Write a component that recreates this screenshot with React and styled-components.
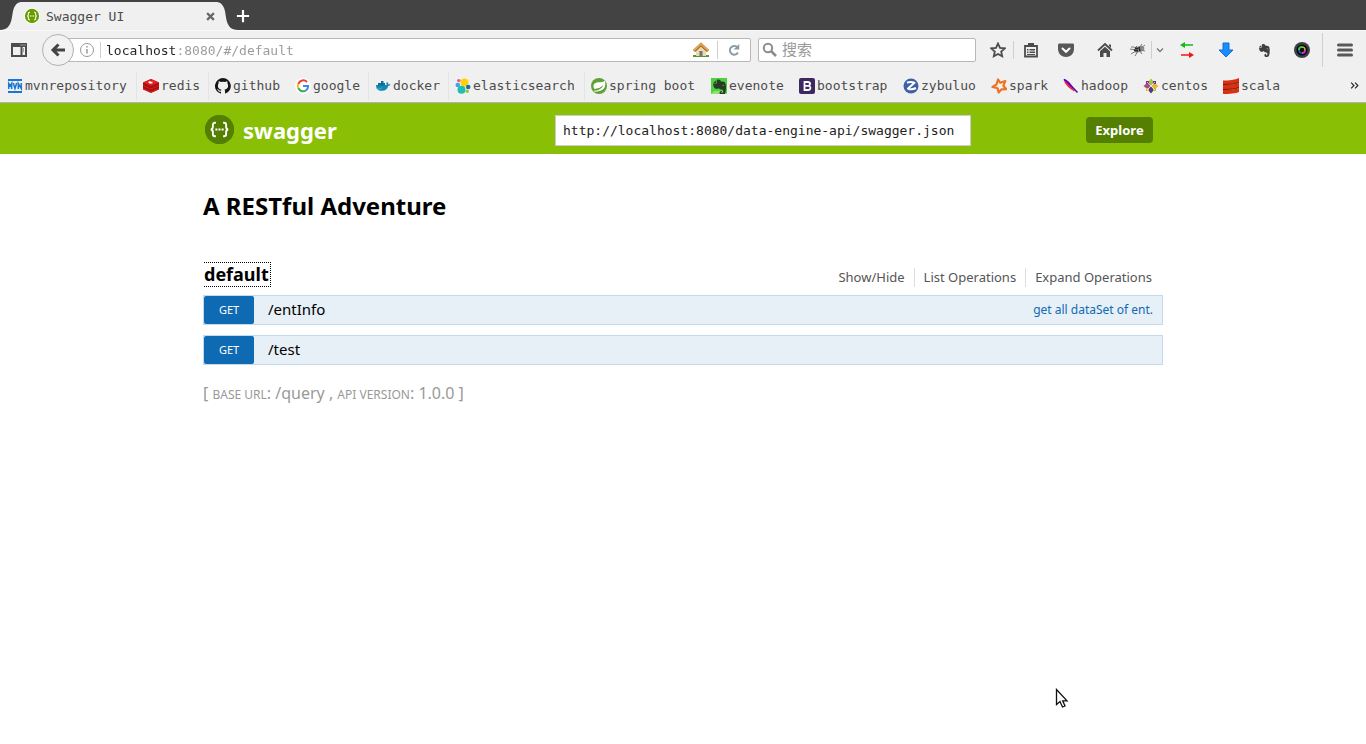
import React from 'react';
import styled, { createGlobalStyle } from 'styled-components';

const mono = '"DejaVu Sans Mono", "Noto Sans CJK SC", monospace';
const sans = '"Noto Sans", "Noto Sans CJK SC", sans-serif';

const GlobalStyle = createGlobalStyle`
  * { box-sizing: border-box; }
  body { margin: 0; background: #fff; font-family: ${sans}; color: #000; }
  button, input { font: inherit; color: inherit; margin: 0; padding: 0; border: 0; background: none; }
  h1, h2, ul { margin: 0; padding: 0; font-weight: 700; }
  ul { list-style: none; font-weight: 400; }
  a { color: inherit; text-decoration: none; }
  svg { display: block; flex: none; }
`;

const Chrome = styled.header`
  background: #f0f0f0;
  border-bottom: 1px solid #b4b4b4;
  font-family: ${mono};
  font-size: 13px;
  color: #4c4c4c;
`;
const TabStrip = styled.div`
  display: flex;
  height: 30px;
  background: #434343;
`;
const Tab = styled.div`
  display: flex;
  align-items: center;
  gap: 6px;
  width: 194px;
  height: 28px;
  margin-top: 2px;
  background: #f0f0f0;
  padding-left: 2px;
`;
const TabEdge = styled.svg`
  margin-top: 2px;
`;
const TabTitle = styled.span`
  flex: 1;
`;
const IconButton = styled.button`
  display: flex;
  align-items: center;
  justify-content: center;
  flex: none;
  width: ${(p) => p.$w || 38}px;
  height: 32px;
`;
const TabButton = styled(IconButton)`
  height: 28px;
`;
const NavBar = styled.div`
  display: flex;
  align-items: center;
  height: 39px;
  border-top: 1px solid #f8f8f8;
`;
const BackButton = styled.button`
  display: flex;
  align-items: center;
  justify-content: center;
  flex: none;
  position: relative;
  width: 32px;
  height: 32px;
  margin: 0 -8px 0 4px;
  border: 1px solid #b2b2b2;
  border-radius: 50%;
  background: #f2f2f2;
`;
const Field = styled.div`
  display: flex;
  align-items: center;
  height: 24px;
  border: 1px solid #b8b8b8;
  border-radius: 2px;
  background: #fff;
`;
const UrlField = styled(Field)`
  flex: 1;
  min-width: 0;
  padding-left: 12px;
`;
const SearchField = styled(Field)`
  width: 218px;
  margin: 0 6px 0 7px;
  padding-left: 3px;
  gap: 4px;
`;
const Address = styled.input`
  flex: 1;
  min-width: 0;
  height: 22px;
  outline: none;
  color: transparent;
  background: linear-gradient(90deg, #222 9ch, #999 9ch);
  background-clip: text;
  -webkit-background-clip: text;
`;
const SearchInput = styled.input`
  flex: 1;
  min-width: 0;
  height: 22px;
  outline: none;
  font-size: 15px;
  &::placeholder { color: #999; opacity: 1; }
`;
const Rule = styled.span`
  flex: none;
  width: 1px;
  height: ${(p) => p.$h || 18}px;
  margin: 0 ${(p) => p.$gap || 0}px;
  background: #cfcfcf;
`;
const Bookmarks = styled.nav`
  display: flex;
  align-items: center;
  height: 33px;
  padding: 0 6px 0 7px;
`;
const Bookmark = styled.a`
  display: flex;
  align-items: center;
  gap: 2px;
  flex: none;
  height: 28px;
  padding-right: 7px;
  margin-right: 6px;
  border-right: 1px solid ${(p) => (p.$line ? '#e4e4e4' : 'transparent')};
`;
const BookmarkName = styled.span`
  min-width: ${(p) => p.$chars * 8}px;
`;
const MoreButton = styled(IconButton)`
  margin-left: auto;
`;

const Banner = styled.div`
  background: #89bf04;
`;
const Wrap = styled.div`
  max-width: 960px;
  margin: 0 auto;
`;
const BannerRow = styled(Wrap)`
  display: flex;
  align-items: center;
  height: 51px;
  padding: 2px 10px 0 2px;
`;
const Logo = styled.a`
  display: flex;
  align-items: center;
  gap: 9px;
  flex: 1;
  color: #fff;
  font-size: 22px;
  line-height: 28px;
  font-weight: 700;
`;
const SpecInput = styled.input`
  width: 416px;
  height: 31px;
  margin: 2px 115px 0 0;
  padding: 0 7px;
  border: 1px solid #ccc;
  background: #fff;
  color: #222;
  font-family: ${mono};
  font-size: 13px;
`;
const Explore = styled.button`
  width: 67px;
  height: 26px;
  border-radius: 4px;
  background: #547f00;
  color: #fff;
  font-size: 13px;
  font-weight: 700;
`;
const Title = styled.h1`
  padding-top: 34px;
  font-size: 24px;
  line-height: 36px;
`;
const ResourceHead = styled.div`
  display: flex;
  justify-content: space-between;
  margin-top: 38px;
  padding-left: 1px;
  padding-right: 11px;
`;
const ResourceName = styled.h2`
  font-size: 18px;
  line-height: 23px;
  a { display: block; padding-right: 1px; border: 1px dotted #000; border-left: 0; }
`;
const Options = styled.ul`
  display: flex;
  margin-top: 6px;
  font-size: 13px;
  line-height: 18px;
  color: #555;
`;
const Option = styled.li`
  padding: 0 9px;
  border-right: 1px solid #ddd;
  &:last-child { border: 0; padding-right: 0; }
`;
const Operation = styled.li`
  display: flex;
  height: 30px;
  margin-bottom: 10px;
  padding-right: 9px;
  border: 1px solid #c3d9ec;
  background: #e7f0f7;
`;
const Operations = styled.ul`
  margin-top: 8px;
`;
const Method = styled.a`
  width: 50px;
  border-radius: 2px;
  background: #0f6ab4;
  color: #fff;
  text-align: center;
  font-size: 11px;
  line-height: 28px;
`;
const Path = styled.a`
  flex: 1;
  padding-left: 14px;
  font-size: 15px;
  line-height: 26px;
`;
const Summary = styled.a`
  color: #0f6ab4;
  font-size: 12px;
  line-height: 28px;
`;
const Footer = styled.footer`
  padding: 6px 0 24px;
  color: #999;
  font-size: 16px;
  line-height: 24px;
`;
const Small = styled.span`
  font-size: 12px;
  text-transform: uppercase;
`;
const Pointer = styled.svg`
  position: absolute;
  left: 1055px;
  top: 688px;
`;

const Svg = ({ s = 16, children, ...rest }) => (
  <svg width={s} height={s} viewBox="0 0 16 16" fill="none" aria-hidden="true" {...rest}>{children}</svg>
);

const Braces = ({ s, bg, ring }) => (
  <svg width={s} height={s} viewBox="0 0 28 28" fill="none" aria-hidden="true">
    <circle cx="14" cy="14" r="14" fill={ring || bg} />
    <circle cx="14" cy="14" r={ring ? 12.5 : 14} fill={bg} />
    <path d="M10.5 7.5H9.6c-1.4 0-2 .7-2 2v2.2c0 1.5-.5 2.1-2 2.3 1.500.2 2 .8 2 2.300v2.200c0 1.300.6 2 2 2h.9M17.500 7.500h.9c1.400 0 2 .7 2 2v2.200c0 1.500.5 2.100 2 2.300-1.500.2-2 .8-2 2.300v2.200c0 1.300-.6 2-2 2h-.9" stroke="#fff" strokeWidth="1.800" />
    <path d="M10 13h2v2h-2zM13 13h2v2h-2zM16 13h2v2h-2z" fill="#fff" />
  </svg>
);

const HomeShape = () => (
  <>
    <path d="M1 8.500 8 2l7 6.500" stroke="#4c4c4c" strokeWidth="1.800" />
    <path d="M12 2.500h2V6l-2-2z" fill="#4c4c4c" />
    <path d="M3 9.200 8 4.700l5 4.500V15H9.500v-4h-3v4H3z" fill="#4c4c4c" />
  </>
);

const Elephant = ({ color }) => (
  <path d="M6 2.500v2.200c0 .5-.2.700-.7.700H3c.2 2.300.8 4 2 4.300 1 .3 2.400.1 2.800-.6.300 1.200 1.200 1.300 2.300 1.300 1 0 1.300.6 1.300 1.500 0 1-.4 1.400-1.400 1.400-.4-1 .2-1.300.9-1.300-1.700-.7-2.700.3-2.500 1.600.2 1.200 1.100 1.600 2.500 1.500 2-.2 2.400-1.500 2.700-4 .3-2.700.1-5-.5-6.400-.4-.8-2-.9-3.500-1C9 2.500 8 1.500 6 2.500zM5.300 2.900 3.100 5h2.200zM10.500 7c.2-.8 1.600-.7 1.700.3z" fill={color} fillRule="evenodd" />
);

const icons = {
  mvn: <><path d="M1 1h14v2H1zM1 13h14v2H1z" fill="#1976d2" /><path d="M1.700 11V5.500L3.200 8l1.500-2.500V11M6.300 5 8 10.500 9.700 5M11.300 11V5.500l3 5V5" stroke="#1976d2" strokeWidth="1.500" /></>,
  redis: <><path d="M0 4.500 8 1l8 3.500v7L8 15l-8-3.500z" fill="#a80f0f" /><path d="M0 4.500 8 1l8 3.500L8 8z" fill="#e02020" /><path d="M0 7.500 8 11l8-3.500M0 10.500 8 14l8-3.500" stroke="#dc1c1c" /><path d="m5 4 2-1 1 1 2-.5-1 1 1 .5-3 .8z" fill="#fff" /></>,
  github: <path d="M8 0a8 8 0 0 0-2.500 15.600c.4.1.5-.2.500-.4v-1.500c-2.200.5-2.700-1-2.700-1-.4-.9-.9-1.200-.9-1.200-.7-.5.1-.5.1-.5.800.1 1.200.8 1.200.8.700 1.200 1.900.9 2.300.7.100-.5.300-.9.500-1.100-1.800-.2-3.600-.9-3.600-4 0-.9.300-1.600.8-2.100-.1-.2-.4-1 .1-2.100 0 0 .7-.2 2.200.8a7.500 7.500 0 0 1 4 0c1.500-1 2.200-.8 2.200-.8.400 1.100.200 1.900.1 2.100.5.600.8 1.300.8 2.100 0 3.100-1.900 3.800-3.700 4 .3.300.6.800.6 1.500v2.200c0 .2.100.500.6.400A8 8 0 0 0 8 0z" fill="#171515" />,
  google: <><circle cx="8" cy="8" r="8" fill="#fff" /><path d="M12 4A5.200 5.200 0 0 0 3.300 5.800" stroke="#ea4335" strokeWidth="2" /><path d="M3.300 5.800a5.200 5.200 0 0 0 0 4.400" stroke="#fbbc05" strokeWidth="2" /><path d="M3.300 10.200a5.200 5.200 0 0 0 8 2" stroke="#34a853" strokeWidth="2" /><path d="M8 8h5.100c0 1.800-.6 3.200-1.800 4.200" stroke="#4285f4" strokeWidth="2" /></>,
  docker: <><path d="M1 7h11c-1-1.200-.8-2.200 0-3 1 .6 1.300 1.300 1.400 2.200.8-.1 1.500 0 2.100.4-.5 1-1.300 1.300-2.300 1.300C12.500 11 10.500 12.800 7 12.800 3 12.800 1 10.500 1 7z" fill="#1488b4" /><path d="M3 5h7v2.500H3zM6 3h2.500v2H6z" fill="#11708e" /><path d="M1.500 10.500c2 .8 4 .5 5.500-.8" stroke="#35b8d6" /></>,
  elastic: <><circle cx="9.500" cy="4.500" r="4" fill="#fed10a" /><circle cx="6.500" cy="11.700" r="4" fill="#24bbb1" /><circle cx="2.800" cy="7" r="2.300" fill="#36a9e0" /><circle cx="13.200" cy="9" r="2.300" fill="#1b6ea8" /><circle cx="3.800" cy="2.600" r="1.700" fill="#ef5098" /><circle cx="12.200" cy="13.200" r="1.700" fill="#93c83e" /></>,
  spring: <><circle cx="8" cy="8" r="8" fill="#5fa134" /><path d="M14 2.500c.8 4 .2 8-3 9.500-2.300 1-4.500 1-6.500 1 3.500-.8 7-3 8-6.500C10 10 6.500 10.500 3.500 11 1 7.500 3.500 4.500 7 4.300c3-.2 5.500.1 7-1.800z" fill="#fff" /><path d="M3 13.200c3 0 6-.5 8-2" stroke="#fff" /></>,
  evernote: <><path d="M0 0h16v16H0z" fill="#52d044" /><path d="M0 16h16l-3-3H3z" fill="#8fe36c" /><g transform="translate(-1.500 -1) scale(1.200)"><Elephant color="#263d24" /></g></>,
  bootstrap: <><rect width="16" height="16" rx="2" fill="#3d2862" /><path d="M5.500 4h3.300c3 0 3 3.700.3 3.800 3.200.1 3 4.200-.3 4.200H5.500zM5.500 7.800h3.500" stroke="#fff" strokeWidth="1.800" /></>,
  zybuluo: <><circle cx="8" cy="8" r="7.500" fill="#3f5fa8" /><path d="M4 4.700c2.500-1 5-.7 7.500 0L5 10.500c2.500 1.200 5.500.8 8-.5" stroke="#fff" strokeWidth="2" strokeLinejoin="round" /></>,
  spark: <path d="m7 1.500 2.300 3.300 5-1.800-2 4.800 3 3.400-4.700.1-3 3.200-1-4.300L1.500 9l4-2.500z" stroke="#ee7325" strokeWidth="2.200" strokeLinejoin="round" />,
  hadoop: <><path d="M.5 1c3 .3 5 2 7 4.500 2 2.400 3.300 5.500 4.500 7-3-.5-5.500-2-7.500-4.500S1.500 4 .5 1z" fill="#c4148f" /><path d="M1 1.500C4 3 8 8 14.500 14.500" stroke="#4a0cb0" strokeWidth="1.500" /><path d="M2 4c2 3 5 6 9.500 8.800" stroke="#f22849" strokeWidth="1.500" /></>,
  centos: <><path d="M8 .5 10.500 3.500V6.500L8 8 5.500 6.500v-3z" fill="#a5c83b" /><path d="M8 15.500l-2.500-3v-3L8 8l2.500 1.500v3z" fill="#4b3a8f" /><path d="m.5 8 3-2.500h3L8 8l-1.500 2.500h-3z" fill="#a14f8c" /><path d="m15.500 8-3 2.500h-3L8 8l1.500-2.500h3z" fill="#efb03c" /><path d="M3 3h3v3H3z" fill="#7b2f8c" /><path d="M10 3h3v3h-3z" fill="#4b3a8f" /><path d="M3 10h3v3H3z" fill="#efb03c" /><path d="M10 10h3v3h-3z" fill="#a5c83b" /><path d="m4 4 8 8M12 4l-8 8" stroke="#fff" strokeWidth=".7" /></>,
  scala: <><path d="M0 2.500C6 2.500 12 2 16 0v4.500C12 6 6 6.500 0 6.500zM0 7c5 0 12-.5 16-2v4.500c-3 1.500-10 2-16 2zM0 12c5 0 12-.5 16-2v4c-3 1.500-10 2-16 2z" fill="#d9300f" /><path d="M0 6.500c7 0 12-.5 16-2M0 11.500c7 0 12-.5 16-2" stroke="#7c140b" /></>,
};

const bookmarks = [
  ['mvn', 'mvnrepository', true], ['redis', 'redis', true], ['github', 'github'], ['google', 'google', true],
  ['docker', 'docker', true], ['elastic', 'elasticsearch', true], ['spring', 'spring boot'], ['evernote', 'evenote'],
  ['bootstrap', 'bootstrap'], ['zybuluo', 'zybuluo'], ['spark', 'spark'], ['hadoop', 'hadoop'], ['centos', 'centos'], ['scala', 'scala'],
];

const operations = [
  { path: '/entInfo', summary: 'get all dataSet of ent.' },
  { path: '/test' },
];

export default function App() {
  return (
    <>
      <GlobalStyle />
      <Chrome>
        <TabStrip>
          <TabEdge width="22" height="28" viewBox="0 0 22 28"><path d="M0 28C14 28 11 12 14 6c1.800-4 4-6 8-6v28z" fill="#f0f0f0" /></TabEdge>
          <Tab>
            <Braces s={16} bg="#6a9e00" ring="#fff" />
            <TabTitle>Swagger UI</TabTitle>
            <TabButton $w={12} aria-label="Close tab"><Svg s={9}><path d="m2 2 12 12M14 2 2 14" stroke="#666" strokeWidth="3.800" /></Svg></TabButton>
          </Tab>
          <TabEdge width="22" height="28" viewBox="0 0 22 28"><path d="M22 28C8 28 11 12 8 6 6.200 2 4 0 0 0v28z" fill="#f0f0f0" /></TabEdge>
          <IconButton $w={10} aria-label="New tab"><Svg s={14}><path d="M8 1v14M1 8h14" stroke="#fff" strokeWidth="2.500" /></Svg></IconButton>
        </TabStrip>
        <NavBar>
          <IconButton aria-label="Sidebar">
            <Svg><path d="M1 2h14v12H1zM1 4h14M10.500 5v9" stroke="#4c4c4c" strokeWidth="2" /><path d="M12.500 6.500v1M12.500 8.500v1" stroke="#4c4c4c" /><path d="M9.500 3h1M11.500 3h1M13.500 3h1" stroke="#ddd" /></Svg>
          </IconButton>
          <BackButton aria-label="Back"><Svg><path d="M8.500 2.500 3 8l5.500 5.500M4 8h11" stroke="#444" strokeWidth="3" /></Svg></BackButton>
          <UrlField>
            <Svg><circle cx="8" cy="8" r="6.500" stroke="#999" /><path d="M8 7v4.500M8 4v1.500" stroke="#999" strokeWidth="1.500" /></Svg>
            <Rule $gap={5} $h={16} />
            <Address aria-label="Address" defaultValue="localhost:8080/#/default" />
            <IconButton $w={32} aria-label="Home page">
              <Svg>
                <path d="M0 13h16v2H0z" fill="#4d9a38" /><path d="M3 7.500 8 3l5 4.500V14H3z" fill="#ead7b4" /><path d="M6.500 9h3v5h-3z" fill="#77736c" />
                <path d="M1 9 8 2.500 15 9" stroke="#8e5213" strokeWidth="3" /><path d="M1 8.500 8 2l7 6.500" stroke="#e6a64b" strokeWidth="1.800" />
              </Svg>
            </IconButton>
            <Rule />
            <IconButton $w={32} aria-label="Reload"><Svg s={14}><path d="M12.500 11a5 5 0 1 1-1-6.500" stroke="#8a9ba8" strokeWidth="2.200" /><path d="M14 1v6.500H7.500z" fill="#8a9ba8" /></Svg></IconButton>
          </UrlField>
          <SearchField>
            <Svg><circle cx="6" cy="6" r="4.200" stroke="#8c8c8c" strokeWidth="2" /><path d="m9 9 5 5" stroke="#8c8c8c" strokeWidth="2.500" /></Svg>
            <SearchInput aria-label="搜索" placeholder="搜索" />
          </SearchField>
          <IconButton $w={31} aria-label="Bookmark this page"><Svg><path d="m8 1.500 2 4.400 4.800.5-3.600 3.200 1 4.700L8 12l-4.200 2.300 1-4.700-3.600-3.200L6 5.900z" stroke="#4c4c4c" strokeWidth="1.800" /></Svg></IconButton>
          <Rule />
          <IconButton $w={33} aria-label="Bookmarks list"><Svg><path d="M2 4h12v10.500H2z" stroke="#4c4c4c" strokeWidth="1.800" /><path d="M5 1h6v4H5zM4 7h1.500v1.500H4zM4 9.500h1.500V11H4zM6.500 7H12v1.500H6.500zM6.500 9.500H12V11H6.500zM4 12h8v1H4z" fill="#4c4c4c" /></Svg></IconButton>
          <IconButton $w={38} aria-label="Pocket"><Svg><path d="M0 3c0-1 .5-1.500 1.500-1.500h13c1 0 1.500.5 1.500 1.500v4c0 5-4 8-8 8S0 12 0 7z" fill="#585858" /><path d="m4.500 6.500 3.500 3.300 3.500-3.300" stroke="#fff" strokeWidth="2" strokeLinecap="round" /></Svg></IconButton>
          <IconButton $w={40} aria-label="Home"><Svg><HomeShape /></Svg></IconButton>
          <IconButton $w={26} aria-label="Firebug">
            <Svg><path d="M4 8c1-3 4-4 8-4 2 .5 3 1.500 2 3.500S9 11 5 10.500z" fill="#8c8c8c" /><path d="M1 5c3 0 5 0 7 2M6 4l3 3M12 2l-3 4M15 3l-4 3M1 12l5-3M5 14l3-5M12 12l-3-4M15 9l-4-1M0 7l6 1" stroke="#777" /><path d="m4 8 4 1M9 5l1 4M5 6l3 1" stroke="#2c2c2c" strokeWidth="1.500" /></Svg>
          </IconButton>
          <Rule />
          <IconButton $w={15} aria-label="Firebug options"><Svg s={8}><path d="m2 5 6 6 6-6" stroke="#777" strokeWidth="2.500" /></Svg></IconButton>
          <IconButton $w={40} aria-label="Proxy"><Svg><path d="M4 3h10" stroke="#12bc12" strokeWidth="1.500" /><path d="M1 3 6 0v6z" fill="#12bc12" /><path d="M2 13h10" stroke="#f31515" strokeWidth="1.500" /><path d="m15 13-5-3v6z" fill="#f31515" /></Svg></IconButton>
          <IconButton aria-label="Downloads"><Svg><path d="M5 1h6v7h4l-7 7-7-7h4z" fill="#1a8cff" stroke="#0d6fd4" /></Svg></IconButton>
          <IconButton aria-label="Evernote"><Svg><Elephant color="#3f3f3f" /></Svg></IconButton>
          <IconButton aria-label="Screenshot">
            <Svg><circle cx="8" cy="8" r="8" fill="#3c4148" /><circle cx="8" cy="8" r="5.500" fill="#08080c" /><path d="M5 8a3 3 0 0 1 3-3" stroke="#2fce4d" strokeWidth="2" /><path d="M8 5a3 3 0 0 1 3 3" stroke="#b9c020" strokeWidth="1.500" /><path d="M11 8a3 3 0 0 1-3 3" stroke="#d934b5" strokeWidth="2" /><path d="M8 11a3 3 0 0 1-3-3" stroke="#1b60a8" strokeWidth="1.500" /><circle cx="8" cy="8" r="2" fill="#111" /></Svg>
          </IconButton>
          <Rule $h={34} $gap={1} />
          <IconButton $w={42} aria-label="Menu"><Svg><path d="M1.500 3h13M1.500 8h13M1.500 13h13" stroke="#585858" strokeWidth="3" strokeLinecap="round" /></Svg></IconButton>
        </NavBar>
        <Bookmarks>
          {bookmarks.map(([icon, name, line]) => (
            <Bookmark key={name} href="#" $line={line}>
              <Svg>{icons[icon]}</Svg>
              <BookmarkName $chars={name.length}>{name}</BookmarkName>
            </Bookmark>
          ))}
          <MoreButton $w={12} aria-label="More bookmarks"><Svg s={9}><path d="m2 3 5 5-5 5M9 3l5 5-5 5" stroke="#222" strokeWidth="2" /></Svg></MoreButton>
        </Bookmarks>
      </Chrome>

      <Banner>
        <BannerRow>
          <Logo href="#"><Braces s={29} bg="#547f00" />swagger</Logo>
          <SpecInput aria-label="Specification URL" defaultValue="http://localhost:8080/data-engine-api/swagger.json" />
          <Explore>Explore</Explore>
        </BannerRow>
      </Banner>

      <Wrap as="main">
        <Title>A RESTful Adventure</Title>
        <ResourceHead>
          <ResourceName><a href="#/default">default</a></ResourceName>
          <Options>
            <Option><a href="#show">Show/Hide</a></Option>
            <Option><a href="#list">List Operations</a></Option>
            <Option><a href="#expand">Expand Operations</a></Option>
          </Options>
        </ResourceHead>
        <Operations>
          {operations.map((op) => (
            <Operation key={op.path}>
              <Method href="#">GET</Method>
              <Path href="#">{op.path}</Path>
              {op.summary && <Summary href="#">{op.summary}</Summary>}
            </Operation>
          ))}
        </Operations>
        <Footer>[ <Small>base url</Small>: /query , <Small>api version</Small>: 1.0.0 ]</Footer>
      </Wrap>
      <Pointer width="14" height="21" viewBox="0 0 14 21" aria-hidden="true">
        <path d="M1.500 1.500v15l3.500-3 2.500 5.500 2.500-1-2.300-5.200h4.300z" fill="#fff" stroke="#111" strokeWidth="1.300" />
      </Pointer>
    </>
  );
}
